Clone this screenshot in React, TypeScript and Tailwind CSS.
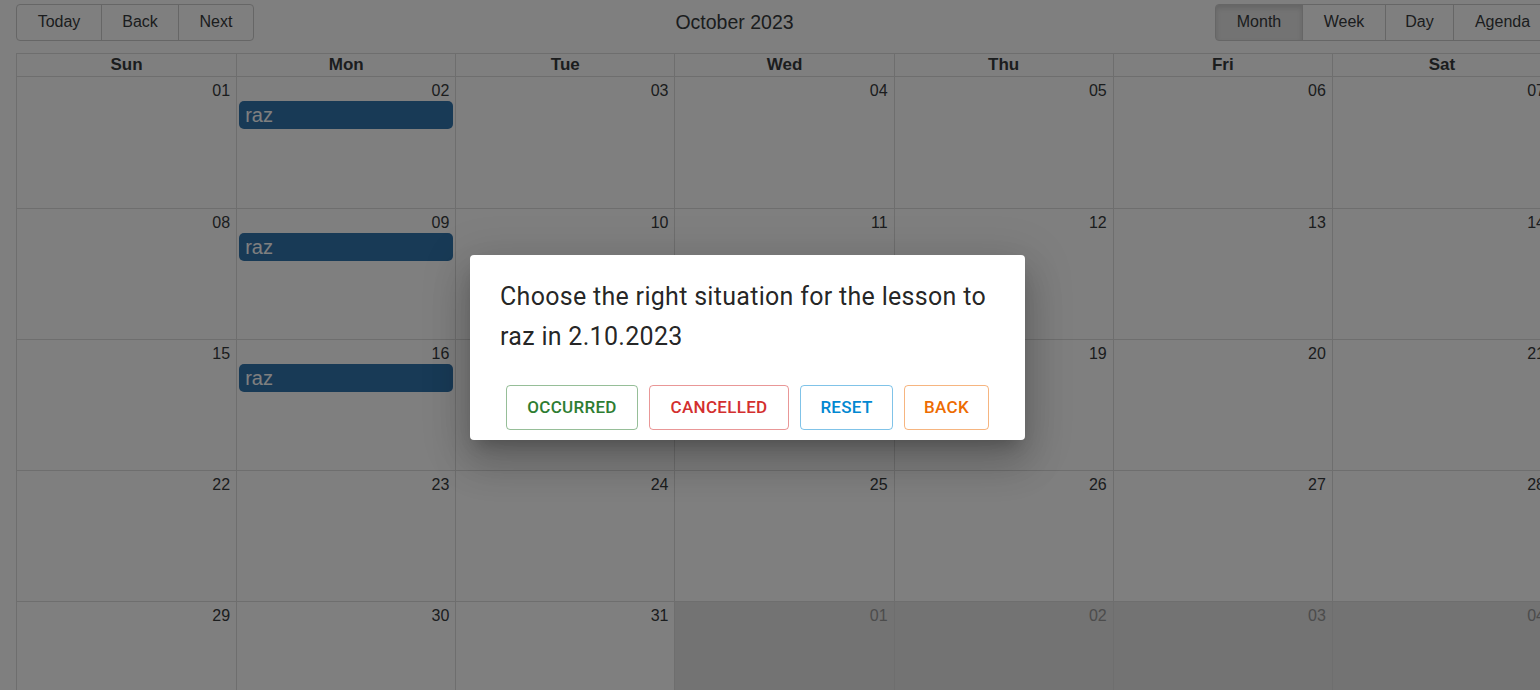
const DAYS = ['Sun', 'Mon', 'Tue', 'Wed', 'Thu', 'Fri', 'Sat']

type Cell = { day: string; offRange?: boolean; event?: string }

const WEEKS: Cell[][] = [
  ['01', '02', '03', '04', '05', '06', '07'],
  ['08', '09', '10', '11', '12', '13', '14'],
  ['15', '16', '17', '18', '19', '20', '21'],
  ['22', '23', '24', '25', '26', '27', '28'],
  ['29', '30', '31', '01', '02', '03', '04'],
].map((week, wi) =>
  week.map((day, di) => ({
    day,
    offRange: wi === 4 && di >= 3,
    event: di === 1 && wi < 3 ? 'raz' : undefined,
  }))
)

const LEFT_BTNS = [
  { label: 'Today', w: 'w-[86px]' },
  { label: 'Back', w: 'w-[78px]' },
  { label: 'Next', w: 'w-[76px]' },
]

const VIEW_BTNS = [
  { label: 'Month', w: 'w-[88px]', active: true },
  { label: 'Week', w: 'w-[84px]' },
  { label: 'Day', w: 'w-[69px]' },
  { label: 'Agenda', w: 'w-[99px]' },
]

const ACTIONS = [
  { label: 'OCCURRED', cls: 'text-[#2e7d32] border-[#2e7d32]/50 w-[132px]' },
  { label: 'CANCELLED', cls: 'text-[#d32f2f] border-[#d32f2f]/50 w-[140px]' },
  { label: 'RESET', cls: 'text-[#0288d1] border-[#0288d1]/50 w-[93px]' },
  { label: 'BACK', cls: 'text-[#ed6c02] border-[#ed6c02]/50 w-[85px]' },
]

export default function App() {
  return (
    <div className="relative w-[1540px] h-[690px] overflow-hidden bg-white text-[#373a3c] font-['Liberation_Sans',Arial,sans-serif]">
      <div className="w-[1536px] ml-4 pt-1">
        {/* Toolbar */}
        <div className="flex items-center h-[37px] mb-3">
          <div className="flex">
            {LEFT_BTNS.map((b, i) => (
              <button
                key={b.label}
                className={`${b.w} h-[37px] pb-px border border-[#ccc] text-[16px] ${i > 0 ? '-ml-px' : ''} ${i === 0 ? 'rounded-l-[4px]' : ''} ${i === LEFT_BTNS.length - 1 ? 'rounded-r-[4px]' : ''}`}
              >
                {b.label}
              </button>
            ))}
          </div>
          <div className="flex-1 text-center text-[19.5px]">October 2023</div>
          <div className="flex">
            {VIEW_BTNS.map((b, i) => (
              <button
                key={b.label}
                className={`${b.w} h-[37px] pb-px border border-[#ccc] text-[16px] ${i > 0 ? '-ml-px' : ''} ${i === 0 ? 'rounded-l-[4px]' : ''} ${i === VIEW_BTNS.length - 1 ? 'rounded-r-[4px]' : ''} ${b.active ? 'bg-[#e6e6e6] border-[#adadad] shadow-[inset_0_3px_5px_rgba(0,0,0,0.125)]' : ''}`}
              >
                {b.label}
              </button>
            ))}
          </div>
        </div>

        {/* Month view */}
        <div className="border border-[#ddd]">
          <div className="grid grid-cols-7 border-b border-[#ddd]">
            {DAYS.map((d, i) => (
              <div key={d} className={`h-[22px] flex items-center justify-center font-bold text-[17px] ${i > 0 ? 'border-l border-[#ddd]' : ''}`}>
                {d}
              </div>
            ))}
          </div>
          {WEEKS.map((week, wi) => (
            <div key={wi} className={`grid grid-cols-7 h-[131px] ${wi > 0 ? 'border-t border-[#ddd]' : ''}`}>
              {week.map((c, di) => (
                <div
                  key={di}
                  className={`flex flex-col ${di > 0 ? 'border-l border-[#ddd]' : ''} ${c.offRange ? 'bg-[#e6e6e6] text-[#999]' : ''}`}
                >
                  <div className="text-right pr-[6px] pt-[5px] text-[16px] leading-[18px] h-[24px]">{c.day}</div>
                  {c.event && (
                    <div className="mx-[2px] h-[28px] rounded-[5px] bg-[#3174ad] text-white text-[20px] leading-[29px] px-[6px]">
                      {c.event}
                    </div>
                  )}
                </div>
              ))}
            </div>
          ))}
        </div>
      </div>

      {/* Backdrop */}
      <div className="absolute inset-0 bg-black/50" />

      {/* Dialog */}
      <div className="absolute left-[470px] top-[255px] w-[555px] h-[185px] bg-white rounded-[4px] font-['Roboto',sans-serif] shadow-[0px_11px_15px_-7px_rgba(0,0,0,0.2),0px_24px_38px_3px_rgba(0,0,0,0.14),0px_9px_46px_8px_rgba(0,0,0,0.12)] flex flex-col">
        <p className="px-[30px] pt-[22px] text-[25px] leading-[40px] text-black/87 tracking-[0.3px]">
          Choose the right situation for the lesson to raz in 2.10.2023
        </p>
        <div className="flex justify-center gap-[11px] mt-[28px]">
          {ACTIONS.map(a => (
            <button
              key={a.label}
              className={`h-[45px] border rounded-[4px] text-[17px] font-medium tracking-[0.3px] ${a.cls}`}
            >
              {a.label}
            </button>
          ))}
        </div>
      </div>
    </div>
  )
}
